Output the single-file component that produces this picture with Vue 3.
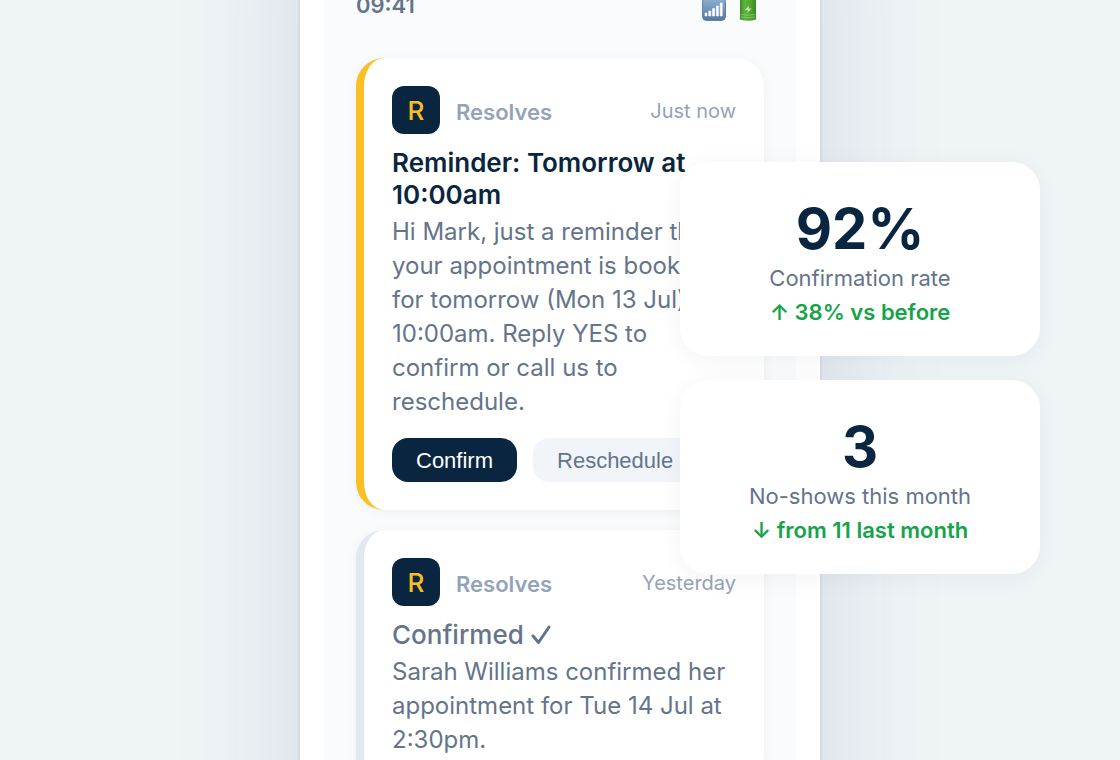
<script setup>
const messages = [
  {
    id: 1,
    time: 'Just now',
    title: 'Reminder: Tomorrow at 10:00am',
    body: 'Hi Mark, just a reminder that your appointment is booked for tomorrow (Mon 13 Jul) at 10:00am. Reply YES to confirm or call us to reschedule.',
    actions: true,
    read: false,
  },
  {
    id: 2,
    time: 'Yesterday',
    title: 'Confirmed',
    body: 'Sarah Williams confirmed her appointment for Tue 14 Jul at 2:30pm.',
    actions: false,
    read: true,
  },
]

const stats = [
  { value: '92%', label: 'Confirmation rate', change: '↑ 38% vs before' },
  { value: '3', label: 'No-shows this month', change: '↓ from 11 last month' },
]
</script>

<template>
  <main class="stage">
    <div class="device">
      <section class="phone">
        <header class="status">
          <span>09:41</span>
          <span class="status-icons">
            <svg width="24" height="24" viewBox="0 0 24 24" aria-label="Signal">
              <defs>
                <linearGradient id="signal" x1="0" y1="0" x2="0" y2="1">
                  <stop offset="0" stop-color="#8fb3d3" />
                  <stop offset="1" stop-color="#54779f" />
                </linearGradient>
              </defs>
              <rect x="0.5" y="0.5" width="23" height="23" rx="4" fill="url(#signal)" stroke="#6382a3" />
              <path d="M3 16h2v3H3zM6.800 14h2v5h-2zM10.600 11.500h2V19h-2zM14.400 9h2v10h-2zM18.200 6h2v13h-2z" fill="#fff" stroke="#fff" stroke-width=".6" />
            </svg>
            <svg width="24" height="24" viewBox="0 0 24 24" aria-label="Battery">
              <defs>
                <linearGradient id="cell" x1="0" y1="0" x2="1" y2="0">
                  <stop offset="0" stop-color="#3f8a28" />
                  <stop offset=".3" stop-color="#5fb53e" />
                  <stop offset=".7" stop-color="#4ea32e" />
                  <stop offset="1" stop-color="#3b8626" />
                </linearGradient>
              </defs>
              <path d="M4 2.500Q12 0 20 2.500V22.500q-8 2.500-16 0z" fill="url(#cell)" />
              <path d="M4.500 17.500q7.500 1.500 15 0M5 20q7 1.500 14 0" fill="none" stroke="#8bcf78" stroke-width=".8" />
              <path d="M13 8.500l-4 4.500h3l-1 3 4.500-4.500h-3z" fill="#c5edba" />
            </svg>
          </span>
        </header>

        <article v-for="m in messages" :key="m.id" class="card" :class="{ read: m.read }">
          <div class="card-head">
            <span class="logo">R</span>
            <span class="app">Resolves</span>
            <time class="time">{{ m.time }}</time>
          </div>
          <h2 class="title">
            {{ m.title }}
            <svg v-if="m.read" class="tick" width="20" height="22" viewBox="0 0 20 22" aria-hidden="true">
              <path d="M2 12l5.500 6.500L18 3" />
            </svg>
          </h2>
          <p class="body">{{ m.body }}</p>
          <div v-if="m.actions" class="actions">
            <button type="button" class="btn primary">Confirm</button>
            <button type="button" class="btn">Reschedule</button>
          </div>
        </article>
      </section>

      <aside class="stats">
        <div v-for="s in stats" :key="s.label" class="stat">
          <strong class="value">{{ s.value }}</strong>
          <span class="label">{{ s.label }}</span>
          <span class="change">{{ s.change }}</span>
        </div>
      </aside>
    </div>
  </main>
</template>

<style>
body {
  background: #eff4f7;
}
</style>

<style scoped>
.stage {
  display: flex;
  justify-content: center;
  height: 100vh;
  overflow: hidden;
  background: #eff4f7;
  font-family: Inter, "Liberation Sans", sans-serif;
  color: #64748b;
}
.device {
  position: relative;
  flex: 0 1 520px;
}
.phone {
  box-sizing: border-box;
  min-height: 140vh;
  margin-top: -20vh;
  padding: 20vh 32px 32px;
  border: solid #fff;
  border-width: 0 24px;
  background: #f9fbfc;
  box-shadow: 0 0 0 2px rgba(10, 37, 64, 0.05), 0 40px 120px rgba(20, 45, 85, 0.13);
}
.status {
  display: flex;
  justify-content: space-between;
  margin-top: -9px;
  padding-bottom: 39px;
  font-size: 22px;
  line-height: 28px;
  font-weight: 600;
}
.status-icons {
  display: flex;
  gap: 10px;
  padding: 6px 4px 0 0;
  height: 22px;
}
.card {
  margin-bottom: 20px;
  padding: 28px;
  border-left: 8px solid #fbbf24;
  border-radius: 28px;
  background: #fff;
  box-shadow: 0 2px 12px rgba(10, 37, 64, 0.05);
}
.card.read {
  border-left-color: #e2e8f0;
}
.card-head {
  display: flex;
  align-items: center;
  gap: 16px;
  margin-bottom: 13px;
}
.logo {
  display: grid;
  place-items: center;
  width: 48px;
  height: 48px;
  border-radius: 12px;
  background: #0a2540;
  color: #fbbf24;
  font-size: 26px;
  font-weight: 500;
}
.app {
  padding-top: 4px;
  color: #94a3b8;
  font-size: 22px;
  line-height: 26px;
  font-weight: 600;
}
.time {
  margin-left: auto;
  padding-top: 2px;
  color: #94a3b8;
  font-size: 20px;
}
.title {
  margin: 0 0 4px;
  color: #0a2540;
  font-size: 26px;
  line-height: 32px;
  font-weight: 600;
}
.read .title {
  color: #64748b;
  font-weight: 500;
}
.tick {
  vertical-align: -2px;
  fill: none;
  stroke: currentColor;
  stroke-width: 3;
  stroke-linecap: round;
  stroke-linejoin: round;
}
.body {
  margin: 0;
  font-size: 24px;
  line-height: 34px;
}
.actions {
  display: flex;
  gap: 16px;
  margin-top: 19px;
}
.btn {
  height: 44px;
  padding: 2px 24px 0;
  border: 0;
  border-radius: 16px;
  background: #f1f5f9;
  color: #64748b;
  font-family: "Liberation Sans", Arial, sans-serif;
  font-size: 22px;
}
.btn.primary {
  background: #0a2540;
  color: #fff;
}
.stats {
  position: absolute;
  top: 162px;
  left: 380px;
  display: grid;
  gap: 24px;
  width: 360px;
}
.stat {
  display: flex;
  flex-direction: column;
  align-items: center;
  padding: 35px 24px 27px;
  border-radius: 28px;
  background: #fff;
  box-shadow: 0 4px 24px rgba(10, 37, 64, 0.05);
}
.value {
  color: #0a2540;
  font-size: 56px;
  line-height: 64px;
  font-weight: 700;
}
.label,
.change {
  font-size: 22px;
  line-height: 34px;
}
.change {
  color: #16a34a;
  font-weight: 600;
}
</style>
